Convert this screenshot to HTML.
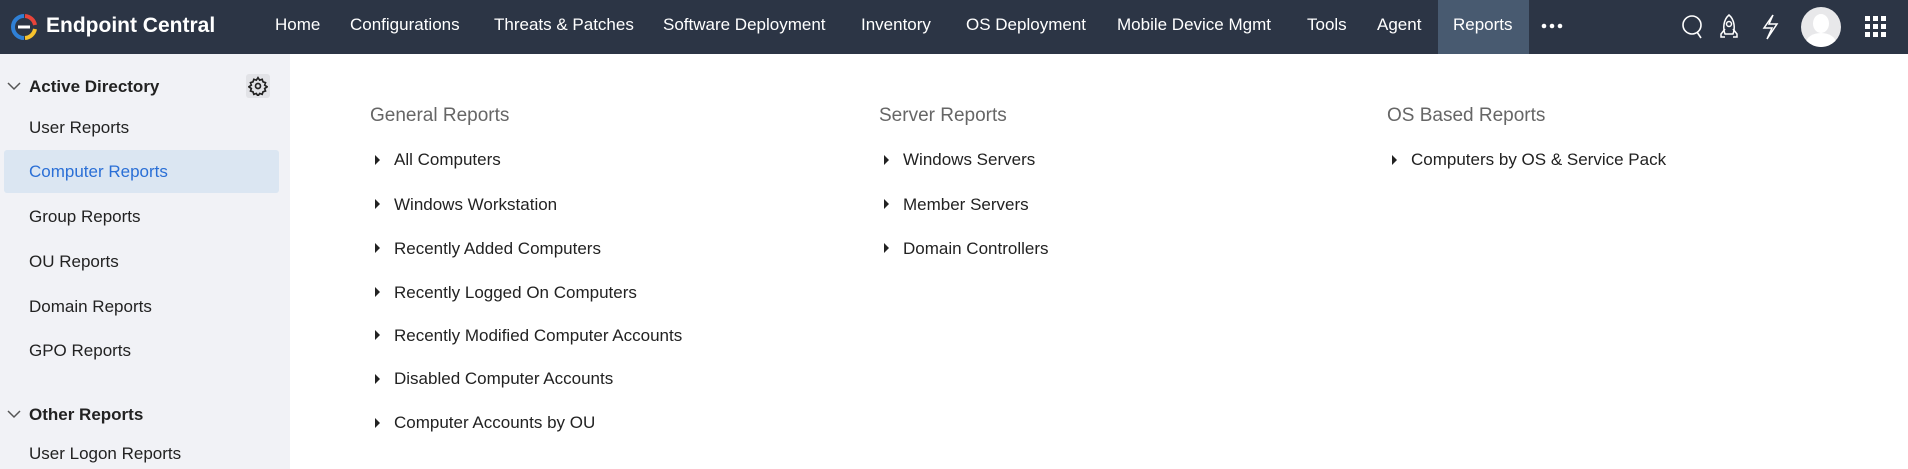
<!DOCTYPE html>
<html><head><meta charset="utf-8"><style>
*{margin:0;padding:0;box-sizing:border-box}
body{width:1908px;height:469px;overflow:hidden;background:#fff;font-family:"Liberation Sans",sans-serif;position:relative}
.hdr{position:absolute;left:0;top:0;width:1908px;height:54px;background:#2c3545}
.t{position:absolute;white-space:nowrap;line-height:1}
.nav{color:#fff;font-size:17px;top:16px}
.side{position:absolute;left:0;top:54px;width:290px;height:415px;background:#f1f2f6}
.si{font-size:17px;color:#222;left:29px}
.ci{font-size:17px;color:#222}
.h{font-size:19px;color:#666}
.tri{position:absolute;width:0;height:0;border-top:5px solid transparent;border-bottom:5px solid transparent;border-left:5px solid #222}
</style></head><body>
<div class="hdr"></div>
<svg style="position:absolute;left:10px;top:13px" width="28" height="28" viewBox="0 0 28 28">
<path d="M14 3 A11 11 0 0 0 14 25" fill="none" stroke="#2f80d6" stroke-width="4"/>
<path d="M15 3 A11 11 0 0 1 25 12" fill="none" stroke="#e8443a" stroke-width="4"/>
<path d="M25 16 A11 11 0 0 1 15 25" fill="none" stroke="#f6c22d" stroke-width="4"/>
<rect x="8" y="12.5" width="12" height="3" fill="#fff"/>
</svg>
<div class="t" style="left:46px;top:15px;color:#fff;font-size:21px;font-weight:bold">Endpoint Central</div>
<div style="position:absolute;left:1438px;top:0;width:91px;height:54px;background:#485a70"></div>
<div class="t nav" style="left:275px">Home</div>
<div class="t nav" style="left:350px">Configurations</div>
<div class="t nav" style="left:494px">Threats &amp; Patches</div>
<div class="t nav" style="left:663px">Software Deployment</div>
<div class="t nav" style="left:861px">Inventory</div>
<div class="t nav" style="left:966px">OS Deployment</div>
<div class="t nav" style="left:1117px">Mobile Device Mgmt</div>
<div class="t nav" style="left:1307px">Tools</div>
<div class="t nav" style="left:1377px">Agent</div>
<div class="t nav" style="left:1453px">Reports</div>
<svg style="position:absolute;left:1541px;top:22px" width="24" height="8"><circle cx="3" cy="4" r="2.3" fill="#fff"/><circle cx="11" cy="4" r="2.3" fill="#fff"/><circle cx="19" cy="4" r="2.3" fill="#fff"/></svg>
<svg style="position:absolute;left:1680px;top:13px" width="26" height="28" viewBox="0 0 26 28" fill="none" stroke="#fff" stroke-width="1.6"><circle cx="12" cy="12" r="9"/><path d="M17 19 L21 25"/></svg>
<svg style="position:absolute;left:1718px;top:13px" width="22" height="28" viewBox="0 0 22 28" fill="none" stroke="#fff" stroke-width="1.5"><path d="M11 2 C17 7 17 16 15 21 H7 C5 16 5 7 11 2Z"/><circle cx="11" cy="11" r="2.5"/><path d="M7 16 L3 21 V24 H7 M15 16 L19 21 V24 H15"/></svg>
<svg style="position:absolute;left:1760px;top:13px" width="20" height="28" viewBox="0 0 20 28" fill="none" stroke="#fff" stroke-width="1.5"><path d="M13 2 L4 15 H12 L7 26 L17 11 H9 Z"/></svg>
<div style="position:absolute;left:1801px;top:7px;width:40px;height:40px;border-radius:50%;background:#e8e8ea;overflow:hidden"><div style="position:absolute;left:12px;top:7px;width:16px;height:19px;border-radius:50%;background:#fff"></div><div style="position:absolute;left:5px;top:26px;width:30px;height:20px;border-radius:50%;background:#fff"></div></div>
<svg style="position:absolute;left:1865px;top:16px" width="22" height="22"><g fill="#fff"><rect x="0" y="0" width="5" height="5"/><rect x="8" y="0" width="5" height="5"/><rect x="16" y="0" width="5" height="5"/><rect x="0" y="8" width="5" height="5"/><rect x="8" y="8" width="5" height="5"/><rect x="16" y="8" width="5" height="5"/><rect x="0" y="16" width="5" height="5"/><rect x="8" y="16" width="5" height="5"/><rect x="16" y="16" width="5" height="5"/></g></svg>

<div class="side"></div>
<div style="position:absolute;left:4px;top:150px;width:275px;height:43px;background:#dbe6f2;border-radius:3px"></div>
<svg style="position:absolute;left:7px;top:82px" width="14" height="9"><path d="M1 1 L7 7 L13 1" fill="none" stroke="#555" stroke-width="1.5"/></svg>
<div class="t si" style="top:78px;font-weight:bold;left:29px">Active Directory</div>
<div style="position:absolute;left:246px;top:74px;width:24px;height:24px;background:#e2e3e7;border-radius:3px"></div>
<svg style="position:absolute;left:248px;top:76px" width="20" height="20" viewBox="0 0 24 24" fill="none" stroke="#222" stroke-width="2"><circle cx="12" cy="12" r="3"/><path d="M12 2 l2 3 3-1 1 3 3 1-1 3 3 2-3 2 1 3-3 1-1 3-3-1-2 3-2-3-3 1-1-3-3-1 1-3-3-2 3-2-1-3 3-1 1-3 3 1z"/></svg>
<div class="t si" style="top:119px">User Reports</div>
<div class="t si" style="top:163px;color:#2a6fd6">Computer Reports</div>
<div class="t si" style="top:208px">Group Reports</div>
<div class="t si" style="top:253px">OU Reports</div>
<div class="t si" style="top:298px">Domain Reports</div>
<div class="t si" style="top:342px">GPO Reports</div>
<svg style="position:absolute;left:7px;top:410px" width="14" height="9"><path d="M1 1 L7 7 L13 1" fill="none" stroke="#555" stroke-width="1.5"/></svg>
<div class="t si" style="top:406px;font-weight:bold">Other Reports</div>
<div class="t si" style="top:445px">User Logon Reports</div>

<div class="t h" style="left:370px;top:106px">General Reports</div>
<div class="t h" style="left:879px;top:106px">Server Reports</div>
<div class="t h" style="left:1387px;top:106px">OS Based Reports</div>

<div class="tri" style="left:375px;top:155px"></div><div class="t ci" style="left:394px;top:151px">All Computers</div>
<div class="tri" style="left:375px;top:199px"></div><div class="t ci" style="left:394px;top:196px">Windows Workstation</div>
<div class="tri" style="left:375px;top:243px"></div><div class="t ci" style="left:394px;top:240px">Recently Added Computers</div>
<div class="tri" style="left:375px;top:287px"></div><div class="t ci" style="left:394px;top:284px">Recently Logged On Computers</div>
<div class="tri" style="left:375px;top:330px"></div><div class="t ci" style="left:394px;top:327px">Recently Modified Computer Accounts</div>
<div class="tri" style="left:375px;top:374px"></div><div class="t ci" style="left:394px;top:370px">Disabled Computer Accounts</div>
<div class="tri" style="left:375px;top:418px"></div><div class="t ci" style="left:394px;top:414px">Computer Accounts by OU</div>

<div class="tri" style="left:884px;top:155px"></div><div class="t ci" style="left:903px;top:151px">Windows Servers</div>
<div class="tri" style="left:884px;top:199px"></div><div class="t ci" style="left:903px;top:196px">Member Servers</div>
<div class="tri" style="left:884px;top:243px"></div><div class="t ci" style="left:903px;top:240px">Domain Controllers</div>

<div class="tri" style="left:1392px;top:155px"></div><div class="t ci" style="left:1411px;top:151px">Computers by OS &amp; Service Pack</div>
</body></html>
